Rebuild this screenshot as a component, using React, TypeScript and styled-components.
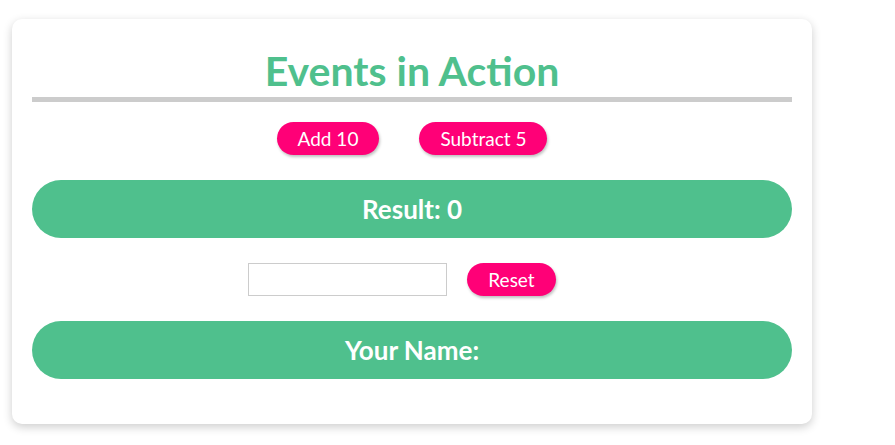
import React, { useState } from "react";
import styled, { createGlobalStyle } from "styled-components";

const GlobalStyle = createGlobalStyle`
  body {
    margin: 0;
    background: #ffffff;
    font-family: "Lato", "Noto Sans", sans-serif;
  }
`;

const Page = styled.div`
  padding: 19px 12px;
`;

const Card = styled.div`
  width: 800px;
  box-sizing: border-box;
  padding: 20px 20px 45px;
  background: #ffffff;
  border-radius: 10px;
  box-shadow: 0 3px 10px rgba(0, 0, 0, 0.2);
`;

const Title = styled.h1`
  margin: 0;
  padding-top: 5px;
  border-bottom: 5px solid #cccccc;
  color: #4fc08d;
  font-size: 41px;
  font-weight: 700;
  line-height: 53px;
  text-align: center;
`;

const ButtonRow = styled.div<{ $gap: number; $top: number; $shift?: number }>`
  display: flex;
  justify-content: center;
  align-items: center;
  gap: ${(p) => p.$gap}px;
  margin-top: ${(p) => p.$top}px;
  padding-right: ${(p) => p.$shift || 0}px;
`;

const PinkButton = styled.button`
  height: 33px;
  padding: 0 21px;
  border: none;
  border-radius: 17px;
  background: #ff0077;
  color: #ffffff;
  font-family: "Lato", "Noto Sans", sans-serif;
  font-size: 19px;
  box-shadow: 1px 2px 3px rgba(0, 0, 0, 0.25);
  cursor: pointer;
`;

const Bar = styled.div`
  height: 58px;
  margin-top: 25px;
  border-radius: 29px;
  background: #4fc08d;
  color: #ffffff;
  display: flex;
  justify-content: center;
  align-items: center;
  font-size: 26px;
  font-weight: 700;
`;

const NameInput = styled.input`
  width: 199px;
  height: 33px;
  box-sizing: border-box;
  border: 1px solid #cccccc;
  padding: 0 6px;
  font-family: "Lato", "Noto Sans", sans-serif;
  font-size: 16px;
  outline: none;
`;

export default function App() {
  const [result, setResult] = useState(0);
  const [name, setName] = useState("");

  return (
    <>
      <GlobalStyle />
      <Page>
        <Card>
          <Title>Events in Action</Title>
          <ButtonRow $gap={40} $top={20}>
            <PinkButton onClick={() => setResult(result + 10)}>Add 10</PinkButton>
            <PinkButton onClick={() => setResult(result - 5)}>Subtract 5</PinkButton>
          </ButtonRow>
          <Bar>Result: {result}</Bar>
          <ButtonRow $gap={20} $top={25} $shift={20}>
            <NameInput value={name} onChange={(e) => setName(e.target.value)} />
            <PinkButton onClick={() => setName("")}>Reset</PinkButton>
          </ButtonRow>
          <Bar>Your Name: {name}</Bar>
        </Card>
      </Page>
    </>
  );
}
